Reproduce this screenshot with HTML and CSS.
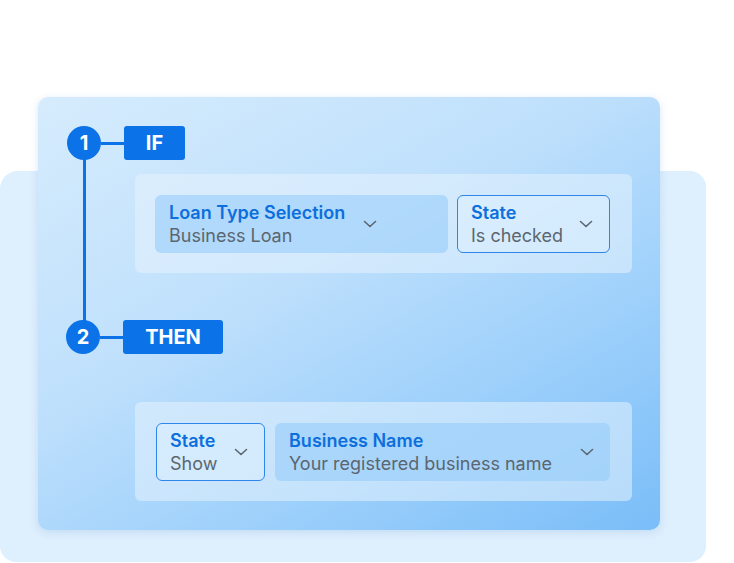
FILE: index.html
```html
<!DOCTYPE html>
<html>
<head>
<meta charset="utf-8">
<link rel="stylesheet" href="styles.css">
</head>
<body>
<div class="stage">
  <div class="back-card"></div>
  <div class="front-card">
    <div class="rail"></div>
    <div class="step">
      <div class="num">1</div>
      <div class="link"></div>
      <div class="tag tag-if">IF</div>
    </div>
    <div class="panel panel-if">
      <div class="dd dd-filled dd-loan">
        <div class="dd-text">
          <div class="dd-label">Loan Type Selection</div>
          <div class="dd-value">Business Loan</div>
        </div>
        <svg class="chev" width="14" height="8" viewBox="0 0 14 8"><path d="M1.5 1.5 L7 6.5 L12.5 1.5" fill="none" stroke="#5b6670" stroke-width="1.6" stroke-linecap="round" stroke-linejoin="round"/></svg>
      </div>
      <div class="dd dd-outline dd-state1">
        <div class="dd-text">
          <div class="dd-label">State</div>
          <div class="dd-value">Is checked</div>
        </div>
        <svg class="chev" width="14" height="8" viewBox="0 0 14 8"><path d="M1.5 1.5 L7 6.5 L12.5 1.5" fill="none" stroke="#5b6670" stroke-width="1.6" stroke-linecap="round" stroke-linejoin="round"/></svg>
      </div>
    </div>
    <div class="step step-then">
      <div class="num">2</div>
      <div class="link"></div>
      <div class="tag tag-then">THEN</div>
    </div>
    <div class="panel panel-then">
      <div class="dd dd-outline dd-state2">
        <div class="dd-text">
          <div class="dd-label">State</div>
          <div class="dd-value">Show</div>
        </div>
        <svg class="chev" width="14" height="8" viewBox="0 0 14 8"><path d="M1.5 1.5 L7 6.5 L12.5 1.5" fill="none" stroke="#5b6670" stroke-width="1.6" stroke-linecap="round" stroke-linejoin="round"/></svg>
      </div>
      <div class="dd dd-filled dd-name">
        <div class="dd-text">
          <div class="dd-label">Business Name</div>
          <div class="dd-value">Your registered business name</div>
        </div>
        <svg class="chev" width="14" height="8" viewBox="0 0 14 8"><path d="M1.5 1.5 L7 6.5 L12.5 1.5" fill="none" stroke="#5b6670" stroke-width="1.6" stroke-linecap="round" stroke-linejoin="round"/></svg>
      </div>
    </div>
  </div>
</div>
</body>
</html>
```
FILE: styles.css
```css
html, body {
  margin: 0;
  padding: 0;
  background: #ffffff;
}
body {
  font-family: Inter, "Noto Sans", sans-serif;
  width: 734px;
  height: 563px;
  overflow: hidden;
}
.stage {
  display: grid;
  width: 734px;
  height: 563px;
}
.back-card {
  grid-area: 1 / 1;
  margin: 171px 0 0 0;
  width: 706px;
  height: 391px;
  background: #deeffd;
  border-radius: 18px 16px 16px 16px;
}
.front-card {
  grid-area: 1 / 1;
  position: relative;
  margin: 97px 0 0 38px;
  width: 622px;
  height: 433px;
  box-sizing: border-box;
  padding: 29px 0 0 29px;
  border-radius: 10px;
  background: linear-gradient(150deg, #d6ecfd 0%, #bfe0fc 40%, #9dd0fb 70%, #7abdf8 100%);
  box-shadow: 0 2px 8px rgba(60, 130, 200, 0.18);
}
.rail {
  position: absolute;
  left: 45px;
  top: 58px;
  width: 3px;
  height: 170px;
  background: #0b72e7;
}
.step {
  display: flex;
  align-items: center;
  height: 34px;
  position: relative;
}
.num {
  width: 34px;
  height: 34px;
  border-radius: 50%;
  background: #0b72e7;
  color: #fff;
  font-weight: 700;
  font-size: 20px;
  display: flex;
  align-items: center;
  justify-content: center;
}
.link {
  width: 23px;
  height: 3px;
  background: #0b72e7;
}
.tag {
  height: 34px;
  border-radius: 3px;
  background: #0b72e7;
  color: #fff;
  font-weight: 700;
  font-size: 20px;
  display: flex;
  align-items: center;
  justify-content: center;
}
.tag-if { width: 61px; }
.tag-then { width: 100px; }
.step-then { margin-top: 47px; margin-left: -1px; }
.panel {
  margin-left: 68px;
  width: 497px;
  height: 99px;
  box-sizing: border-box;
  border-radius: 6px;
  background: rgba(230, 243, 254, 0.55);
  display: flex;
  align-items: center;
}
.panel-if {
  margin-top: 14px;
  padding-left: 20px;
  gap: 9px;
}
.panel-then {
  margin-top: 48px;
  padding-left: 21px;
  gap: 10px;
}
.dd {
  height: 58px;
  box-sizing: border-box;
  border-radius: 6px;
  display: flex;
  align-items: center;
  padding: 0 16px 0 14px;
}
.dd-filled {
  background: rgba(145, 202, 250, 0.55);
}
.dd-outline {
  border: 1px solid #2f86ea;
  background: rgba(225, 241, 254, 0.45);
  padding-left: 13px;
}
.dd-loan { width: 293px; }
.dd-loan .chev { margin-left: 18px; }
.dd-state1 { width: 153px; justify-content: space-between; }
.dd-state2 { width: 109px; justify-content: space-between; }
.dd-name { width: 335px; justify-content: space-between; }
.dd-text { padding-top: 1px; }
.dd-label {
  color: #0c6fdd;
  font-weight: 600;
  font-size: 18px;
  line-height: 23px;
}
.dd-value {
  color: #5b6670;
  font-size: 18px;
  line-height: 23px;
}
.chev { display: block; flex: none; }
```
